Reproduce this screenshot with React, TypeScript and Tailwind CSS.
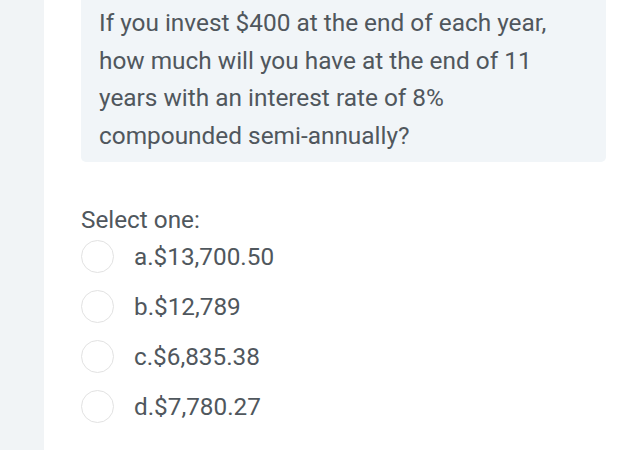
export default function App() {
  const opts = ["a.$13,700.50", "b.$12,789", "c.$6,835.38", "d.$7,780.27"];
  return (
    <div className="flex h-[450px] w-[617px] overflow-hidden bg-white font-['Roboto',sans-serif] text-[#50575d]">
      <div className="w-[44px] shrink-0 bg-[#f1f4f6]" />
      <div className="flex flex-1 flex-col pl-[37px] pr-[11px]">
        <div className="rounded-b-[5px] bg-[#f1f5f8] pb-[8px] pl-[18px] pt-[4px] text-[24.4px] leading-[37.5px]">
          If you invest $400 at the end of each year,<br />
          how much will you have at the end of 11<br />
          years with an interest rate of 8%<br />
          compounded semi-annually?
        </div>
        <div className="mt-[44px] text-[24.3px] leading-[28px]">Select one:</div>
        <div className="mt-[6px] flex flex-col gap-[17px]">
          {opts.map((o) => (
            <div key={o} className="flex items-center">
              <div className="h-[33px] w-[33px] rounded-full border border-[#e2e2e2] bg-white" />
              <span className="ml-[20px] text-[24.3px] leading-[33px]">{o}</span>
            </div>
          ))}
        </div>
      </div>
    </div>
  );
}
